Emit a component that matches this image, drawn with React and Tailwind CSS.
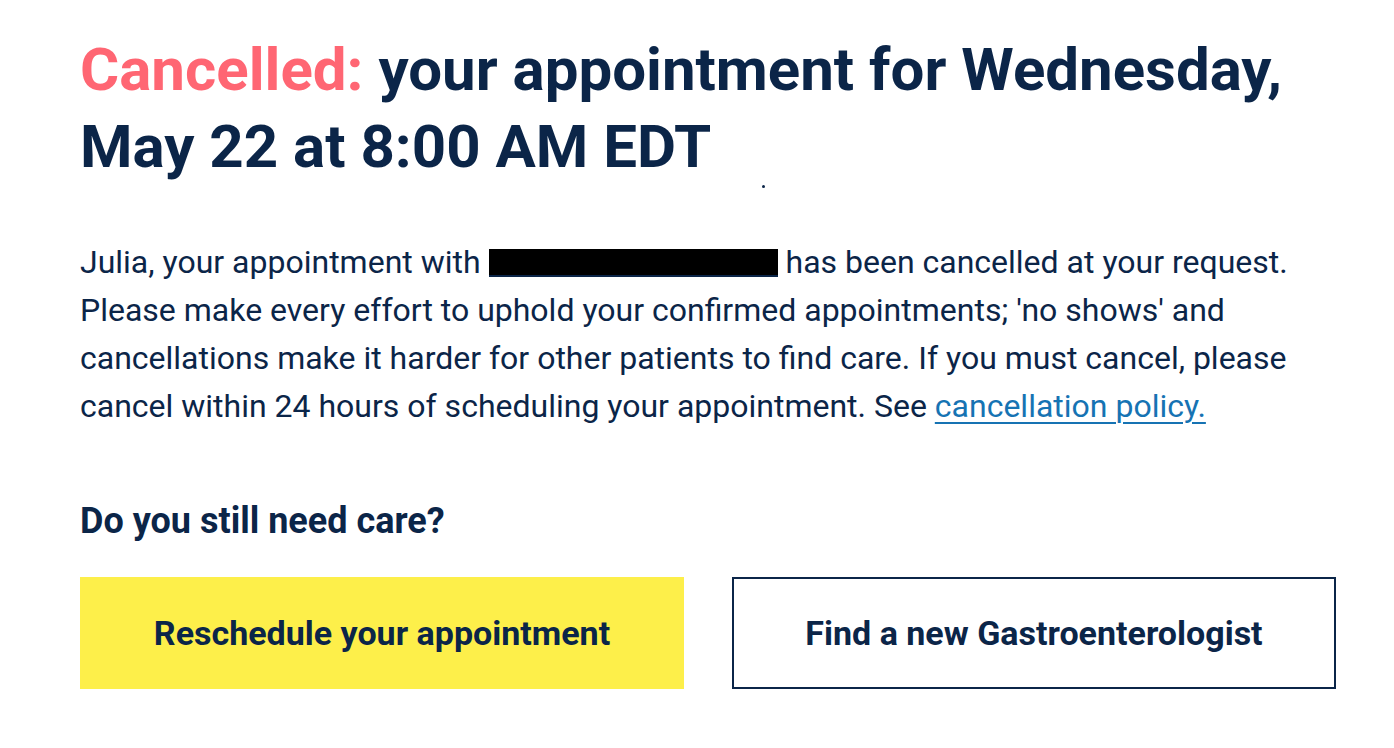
export default function App() {
  return (
    <div className="min-h-[748px] bg-white pl-[80px] pr-[58px] pt-[31px] font-['Roboto',sans-serif] text-[#0b2548]">
      <div className="relative">
        <h1 className="text-[60px] font-bold leading-[77px]">
          <span className="text-[#ff6673]">Cancelled:</span> your appointment for Wednesday, May 22 at 8:00 AM EDT
        </h1>
        <span className="absolute left-[682px] top-[154px] h-[3px] w-[3px] rounded-full bg-[#0b2548]" />
      </div>

      <p className="mt-[53px] max-w-[1225px] text-[32px] leading-[48px]">
        Julia, your appointment with{' '}
        <span className="inline-block h-[28px] w-[289px] translate-y-[4px] border-b-2 border-[#0b2548] bg-black align-baseline" />{' '}
        has been cancelled at your request. Please make every effort to uphold your confirmed appointments; 'no shows' and cancellations make it harder for other patients to find care. If you must cancel, please cancel within 24 hours of scheduling your appointment. See{' '}
        <a href="#" className="text-[#1673b3] underline decoration-2 underline-offset-[5px]">cancellation policy.</a>
      </p>

      <h2 className="mt-[69px] text-[36px] font-bold leading-[44px]">Do you still need care?</h2>

      <div className="mt-[34px] flex gap-[48px]">
        <button className="flex h-[112px] w-[604px] items-center justify-center bg-[#fdef4a] text-[34px] font-bold">
          Reschedule your appointment
        </button>
        <button className="flex h-[112px] w-[604px] items-center justify-center border-2 border-[#0b2548] bg-white text-[34px] font-bold">
          Find a new Gastroenterologist
        </button>
      </div>
    </div>
  );
}
